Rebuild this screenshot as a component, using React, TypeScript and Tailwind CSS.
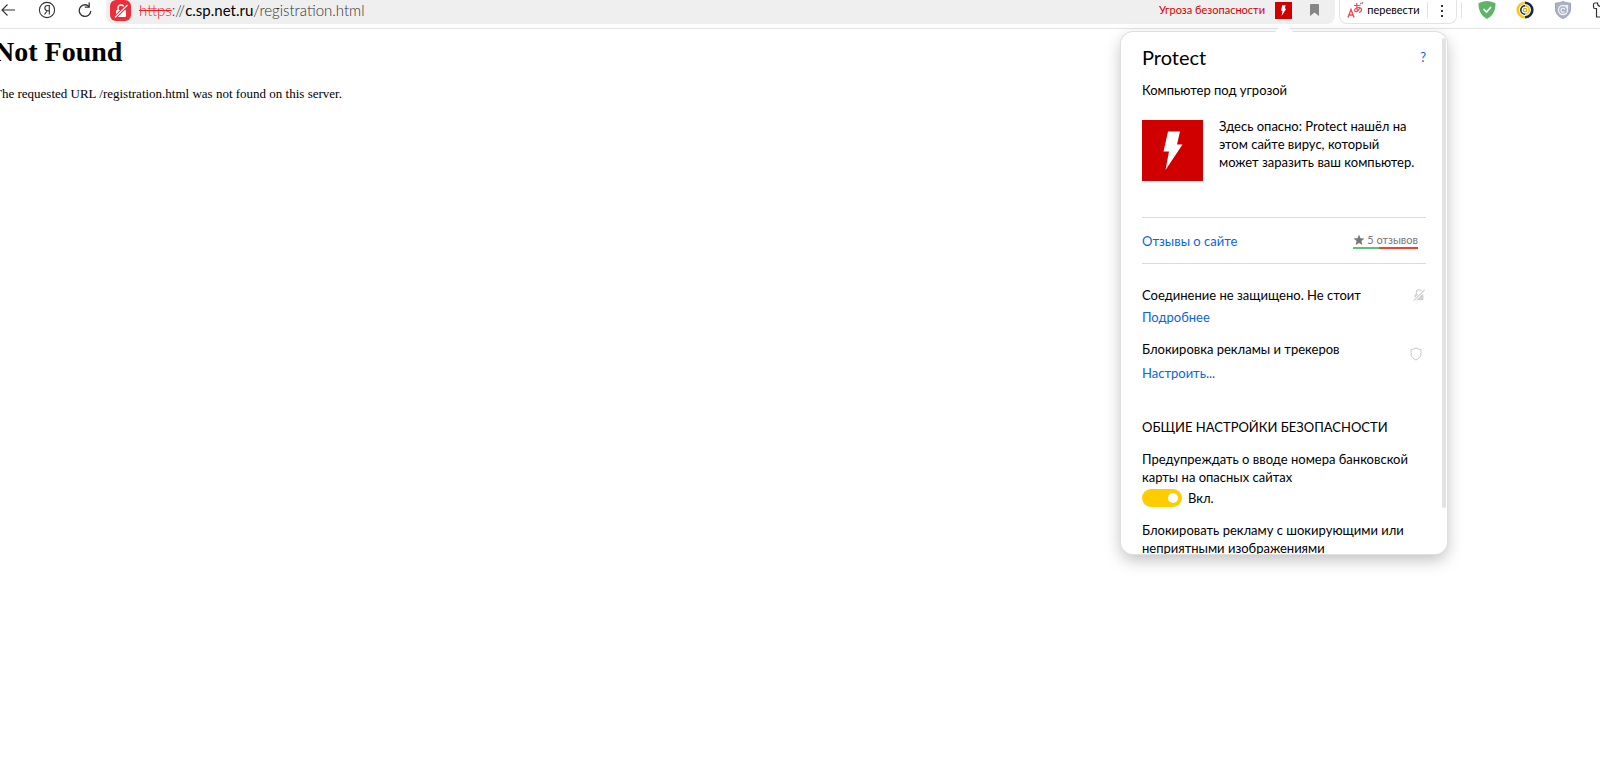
import { useState } from 'react';

type SecurityOption = {
  id: string;
  label: string;
};

const SECURITY_OPTIONS: SecurityOption[] = [
  { id: 'bank-card', label: 'Предупреждать о вводе номера банковской карты на опасных сайтах' },
  { id: 'shock-ads', label: 'Блокировать рекламу с шокирующими или неприятными изображениями' },
];

function BoltIcon({ className }: { className: string }) {
  return (
    <svg viewBox="0 0 61 61" className={className} aria-hidden="true">
      <rect width="61" height="61" fill="#d10000" />
      <path d="M26 11.5h12l-3 13h5.5L23.5 50 27 31.500h-5.500z" fill="#fff" />
    </svg>
  );
}

function LockOffIcon({ className, slash }: { className: string; slash: string }) {
  return (
    <svg viewBox="0 0 16 16" className={className} fill="none" aria-hidden="true">
      <path d="M5 7V5a3 3 0 0 1 6 0v2" stroke="currentColor" strokeWidth="1.4" />
      <rect x="3" y="7" width="10" height="7" rx="1" fill="currentColor" />
      <path d="M2 14.5 14.5 2" stroke={slash} strokeWidth="3.2" />
      <path d="M2 14.5 14.5 2" stroke="currentColor" strokeWidth="1.3" />
    </svg>
  );
}

function TranslateIcon() {
  return (
    <svg viewBox="0 0 16 16" className="h-4 w-4" fill="none" stroke="#f0475a" aria-hidden="true">
      <path d="M1 15.5 4 7.5l3 8M2 13h4" strokeWidth="1.4" />
      <path d="M7 3.5h6.5M9.8 1c-.2 3.5 0 6 .8 8M13 5c-1 3-3 5-4.8 4.5-1.5-1 0-4 3.3-4 4 0 4 4 .5 5M13.5 .8l.6 1.5M15.2 .3l.6 1.5" strokeWidth="1.2" />
    </svg>
  );
}

function Toolbar() {
  return (
    <header className="flex h-[29px] items-start overflow-hidden border-b border-[#e3e3e3] bg-white">
      <button type="button" aria-label="Назад" className="flex h-5 w-4 shrink-0 items-center justify-center">
        <svg viewBox="0 0 14 14" className="h-3.5 w-3.5" fill="none" stroke="#333" strokeWidth="1.1">
          <path d="M14 7H1M6.5 1.5 1 7l5.5 5.5" />
        </svg>
      </button>
      <button type="button" aria-label="Яндекс" className="ml-5.5 flex h-5 w-4.5 shrink-0 items-center justify-center">
        <svg viewBox="0 0 18 18" className="h-4.5 w-4.5" fill="none" stroke="#333">
          <circle cx="9" cy="9" r="7.6" strokeWidth="1.1" />
          <path d="M11.3 13.5v-9H9.5a2.6 2.6 0 0 0 0 5.2h1.8M9.3 9.7 6.5 13.5" strokeWidth="1.1" />
        </svg>
      </button>
      <button type="button" aria-label="Обновить" className="ml-5 flex h-5 w-4.5 shrink-0 items-center justify-center">
        <svg viewBox="0 0 18 18" className="h-4.5 w-4.5" fill="none" stroke="#333" strokeWidth="1.3">
          <path d="M14.8 10a5.8 5.8 0 1 1-3-5.5L13 6" />
          <path d="M13.2 1.5V6.2H8.8" />
        </svg>
      </button>

      <div className="ml-3 flex h-6 min-w-0 flex-1 items-start rounded-b-lg bg-[#efefef]">
        <button type="button" aria-label="Соединение не защищено" className="ml-1 flex h-[21px] w-[21px] shrink-0 items-center justify-center rounded-md bg-[#e92f3a] text-white">
          <LockOffIcon className="h-4 w-4" slash="#e92f3a" />
        </button>
        <div role="textbox" aria-label="Адрес страницы" tabIndex={0} className="ml-2 min-w-0 flex-1 truncate text-[15px] leading-5 font-light text-[#333]">
          <span className="text-[#f02020] line-through">https</span>
          <span>://</span>
          <span className="font-normal text-black">c.sp.net.ru</span>
          <span>/registration.html</span>
        </div>
        <button type="button" className="flex h-5 shrink-0 items-center gap-2.5 text-[11px] text-[#d10000]">
          Угроза безопасности
          <BoltIcon className="h-[17px] w-[17px]" />
        </button>
        <button type="button" aria-label="Добавить в закладки" className="mr-4 ml-4.5 flex h-5 w-[9px] shrink-0 items-center">
          <svg viewBox="0 0 9 12" className="h-3 w-[9px]">
            <path d="M1 0h7a1 1 0 0 1 1 1v11L4.5 8.5 0 12V1a1 1 0 0 1 1-1z" fill="#868686" />
          </svg>
        </button>
      </div>

      <div className="ml-1 flex h-6 w-[118px] shrink-0 items-start rounded-b-lg border border-t-0 border-[#e3e3e3]">
        <button type="button" className="flex h-5 flex-1 items-center justify-center gap-1 text-[11px] text-black">
          <TranslateIcon />
          перевести
        </button>
        <span className="mt-0.5 h-4 w-px bg-[#e3e3e3]" />
        <button type="button" aria-label="Ещё" className="flex h-[21px] w-7 items-center justify-center">
          <svg viewBox="0 0 2 12" className="h-3 w-0.5" fill="#333">
            <path d="M0 0h2v2H0zM0 5h2v2H0zM0 10h2v2H0z" />
          </svg>
        </button>
      </div>
      <span className="mt-0.5 ml-1 h-4 w-px shrink-0 bg-[#e3e3e3]" />

      <button type="button" aria-label="Adguard" className="ml-4 flex h-5 w-4.5 shrink-0 items-center">
        <svg viewBox="0 0 18 18" className="h-4.5 w-4.5">
          <path d="M9 0c3 .2 6 1 8.500 2.200 0 7-2 12-8.500 15.800C2.500 14.200.5 9.200.5 2.200 3 1 6 .2 9 0z" fill="#5fb567" />
          <path d="m5.5 8 3 3L13 6" fill="none" stroke="#fff" strokeWidth="1.6" />
        </svg>
      </button>
      <button type="button" aria-label="Расширение" className="ml-5 flex h-5 w-4.5 shrink-0 items-center">
        <svg viewBox="0 0 18 18" className="h-4.5 w-4.5" fill="none">
          <path d="M9 1.7a7.3 7.3 0 0 0 0 14.6" stroke="#fbc817" strokeWidth="2.6" />
          <path d="M9 1.7a7.3 7.3 0 0 1 0 14.6" stroke="#14284b" strokeWidth="2.6" />
          <path d="M9 4.8a4.2 4.2 0 0 0 0 8.4" stroke="#14284b" strokeWidth="1.5" />
          <path d="M9 4.8a4.2 4.2 0 0 1 0 8.4" stroke="#fbc817" strokeWidth="1.8" />
          <circle cx="9" cy="9" r="1.7" stroke="#d5a91f" strokeWidth="1.3" />
        </svg>
      </button>
      <button type="button" aria-label="Защита" className="ml-5 flex h-5 w-4.5 shrink-0 items-center">
        <svg viewBox="0 0 18 18" className="h-4.5 w-4.5" fill="none">
          <path d="M9 .5c2.5 1 4.5 1.5 7.5 1.7v5.500c0 4.800-3 8-7.500 9.800-4.500-1.800-7.500-5-7.500-9.800V2.200C4.500 2 6.500 1.500 9 .5z" fill="#aab2c4" stroke="#98a1b5" />
          <circle cx="9" cy="9" r="4.5" stroke="#eef1f6" strokeWidth="1.3" />
          <path d="M10.8 8.5a2 2 0 1 0-.3 2M11 4.5h2.5v2.5" stroke="#eef1f6" strokeWidth="1.2" />
        </svg>
      </button>
      <button type="button" aria-label="Расширения" className="ml-5 flex h-5 w-2 shrink-0 items-center overflow-hidden">
        <svg viewBox="0 0 18 18" className="h-4.5 w-4.5 shrink-0" fill="none" stroke="#333" strokeWidth="1.2">
          <path d="M5.5 2H3a1.5 1.5 0 0 0-1.5 1.5V6A1.5 1.5 0 0 0 3 7.5h1.5V16h9V7.5H15A1.5 1.5 0 0 0 16.5 6V3.5A1.5 1.5 0 0 0 15 2h-2.5a3.5 3.5 0 0 1-7 0z" />
        </svg>
      </button>
    </header>
  );
}

function ProtectPopup() {
  const [enabled, setEnabled] = useState<Record<string, boolean>>({
    'bank-card': true,
    'shock-ads': true,
  });

  return (
    <aside aria-label="Protect" className="absolute top-8 right-[153px] w-[326px]">
      <svg viewBox="0 0 20 10" className="absolute -top-[9px] left-[153px] h-2.5 w-5" aria-hidden="true">
        <path d="M0 10 10 0l10 10z" fill="#fff" />
      </svg>
      <div className="flex h-[522px] overflow-hidden rounded-xl bg-white shadow-[0_0_0_1px_#e0e0e0,0_6px_16px_rgba(0,0,0,0.25)]">
        <div className="min-w-0 flex-1 pt-3 pr-4 pl-[21px] text-[13px] leading-[18px] text-black">
          <div className="flex h-[26px] items-center justify-between">
            <h2 className="text-xl">Protect</h2>
            <a href="#help" aria-label="Справка" className="text-[#0b66d8]">?</a>
          </div>
          <p className="mt-[11px]">Компьютер под угрозой</p>

          <div className="mt-4.5 flex gap-4 pb-9">
            <BoltIcon className="mt-[3px] h-[61px] w-[61px] shrink-0" />
            <p className="max-w-50">Здесь опасно: Protect нашёл на этом сайте вирус, который может заразить ваш компьютер.</p>
          </div>

          <div className="flex h-[47px] items-center justify-between border-y border-[#dcdcdc]">
            <a href="#reviews" className="text-[#0b66d8]">Отзывы о сайте</a>
            <a href="#reviews" className="mr-2 text-[11px] leading-[14px] text-[#777]">
              <span className="flex items-center gap-0.5">
                <svg viewBox="0 0 12 12" className="h-3 w-3" fill="#777" aria-hidden="true">
                  <path d="m6 .5 1.500 3.800 4 .2-3.100 2.600 1 4L6 8.900l-3.400 2.200 1-4L.5 4.500l4-.2z" />
                </svg>
                5 отзывов
              </span>
              <span className="flex h-0.5">
                <span className="w-2/5 bg-[#5fbf7f]" />
                <span className="flex-1 bg-[#f0432f]" />
              </span>
            </a>
          </div>

          <div className="mt-[22px] flex items-start justify-between">
            <div>
              <p>Соединение не защищено. Не стоит</p>
              <a href="#details" className="mt-1 block text-[#0b66d8]">Подробнее</a>
            </div>
            <LockOffIcon className="mt-0.5 h-3.5 w-3.5 text-[#d0d0d0]" slash="#fff" />
          </div>
          <div className="mt-3.5 flex items-start justify-between">
            <div>
              <p>Блокировка рекламы и трекеров</p>
              <a href="#adblock" className="mt-1.5 block text-[#0b66d8]">Настроить...</a>
            </div>
            <svg viewBox="0 0 12 14" className="mt-[7px] mr-1 h-3.5 w-3" fill="none" stroke="#c8c8c8" aria-hidden="true">
              <path d="M6 1c1.5.8 3 1.2 5 1.5V7c0 2.8-2 4.8-5 6-3-1.2-5-3.2-5-6V2.5C3 2.2 4.5 1.8 6 1z" />
            </svg>
          </div>

          <h3 className="mt-9">ОБЩИЕ НАСТРОЙКИ БЕЗОПАСНОСТИ</h3>
          {SECURITY_OPTIONS.map((option) => (
            <div key={option.id} className="mt-3.5">
              <p id={`${option.id}-label`}>{option.label}</p>
              <label className="mt-[3px] flex items-center gap-1.5">
                <input
                  type="checkbox"
                  aria-labelledby={`${option.id}-label`}
                  checked={enabled[option.id]}
                  onChange={(e) => setEnabled({ ...enabled, [option.id]: e.target.checked })}
                  className="flex h-[18px] w-10 appearance-none items-center rounded-full bg-gray-300 px-1 after:h-2.5 after:w-2.5 after:rounded-full after:bg-white checked:justify-end checked:bg-[#ffcc00]"
                />
                {enabled[option.id] ? 'Вкл.' : 'Выкл.'}
              </label>
            </div>
          ))}
        </div>
        <div className="mt-1.5 mr-px h-[470px] w-1 rounded-full bg-[#e2e2e2]" />
      </div>
    </aside>
  );
}

export default function App() {
  return (
    <div className="relative min-h-screen overflow-hidden bg-white font-['Lato','Open_Sans',sans-serif]">
      <Toolbar />
      <main className="-ml-1.5 font-['Liberation_Serif',serif] text-black">
        <h1 className="pt-[7px] text-[28px] leading-8 font-bold">Not Found</h1>
        <p className="mt-[17px] text-[13px] leading-[18px]">
          The requested URL /registration.html was not found on this server.
        </p>
      </main>
      <ProtectPopup />
    </div>
  );
}
